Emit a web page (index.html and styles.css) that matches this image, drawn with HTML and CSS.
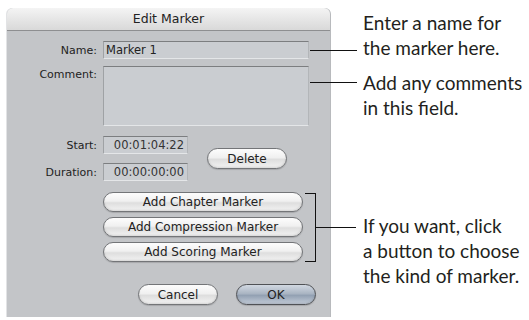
FILE: index.html
```html
<!DOCTYPE html>
<html lang="en">
<head>
    <meta charset="UTF-8">
    <title>Edit Marker</title>
    <link rel="stylesheet" href="styles.css">
</head>
<body>
    <div class="page">
        <!-- Edit Marker dialog -->
        <div class="dialog">
            <div class="titlebar">Edit Marker</div>
            <div class="dialog-body">
                <div class="form-row">
                    <label>Name:</label>
                    <div class="field name-field">Marker 1</div>
                </div>
                <div class="form-row comment-row">
                    <label>Comment:</label>
                    <div class="field comment-field"></div>
                </div>

                <div class="timing">
                    <div class="timing-fields">
                        <div class="form-row">
                            <label>Start:</label>
                            <div class="field time-field">00:01:04:22</div>
                        </div>
                        <div class="form-row">
                            <label>Duration:</label>
                            <div class="field time-field">00:00:00:00</div>
                        </div>
                    </div>
                    <button class="btn delete-btn">Delete</button>
                </div>

                <div class="marker-buttons">
                    <button class="btn wide-btn">Add Chapter Marker</button>
                    <button class="btn wide-btn">Add Compression Marker</button>
                    <button class="btn wide-btn">Add Scoring Marker</button>
                    <span class="bracket"></span>
                </div>

                <div class="actions">
                    <button class="btn action-btn">Cancel</button>
                    <button class="btn action-btn default">OK</button>
                </div>
            </div>
        </div>

        <!-- callouts -->
        <div class="notes">
            <p class="note note-name">Enter a name for<br>the marker here.</p>
            <p class="note note-comment">Add any comments<br>in this field.</p>
            <p class="note note-buttons">If you want, click<br>a button to choose<br>the kind of marker.</p>
        </div>
    </div>
</body>
</html>
```

FILE: styles.css
```css
body {
    margin: 0;
    background-color: #fff;
    font-family: "DejaVu Sans", Verdana, sans-serif;
}

.page {
    display: flex;
    position: relative;
    width: 529px;
    height: 320px;
    overflow: hidden;
}

/* dialog window */
.dialog {
    margin: 8px 0 0 7px;
    width: 323px;
    height: 309px;
    background-color: #c3c5c8;
    border-radius: 6px 6px 0 0;
    box-shadow: -1px 0 0 #e2e3e5, 1px 0 0 #b8babd;
}

.titlebar {
    height: 22px;
    line-height: 22px;
    text-align: center;
    font-size: 12.5px;
    color: #222;
    background: linear-gradient(to bottom, #f4f4f4, #e6e6e6 50%, #d9d9d9);
    border-radius: 6px 6px 0 0;
    border-bottom: 1px solid #8e8f91;
}

.dialog-body {
    padding: 10px 0 0 0;
    font-size: 11px;
    color: #222;
}

.form-row {
    display: flex;
    align-items: center;
}

.form-row label {
    width: 90px;
    text-align: right;
    margin-right: 6px;
}

.comment-row {
    align-items: flex-start;
    margin-top: 7px;
}

.comment-row label {
    margin-top: 2px;
}

.field {
    box-sizing: border-box;
    height: 18px;
    line-height: 16px;
    padding: 0 3px;
    background-color: #cacdd1;
    border: 1px solid;
    border-color: #7c7e80 #b3b6b9 #e4e6e8 #9fa2a5;
}

.name-field {
    width: 206px;
    padding-left: 2px;
    font-size: 11.5px;
}

.comment-field {
    width: 206px;
    height: 60px;
}

.time-field {
    width: 85px;
    height: 18px;
    text-align: right;
    font-size: 11.5px;
    color: #333;
}

/* start / duration + delete */
.timing {
    display: flex;
    align-items: center;
    margin-top: 10px;
}

.timing-fields .form-row + .form-row {
    margin-top: 9px;
}

/* aqua buttons */
.btn {
    box-sizing: border-box;
    height: 21px;
    padding: 0;
    font-family: inherit;
    font-size: 12px;
    color: #222;
    border: 1px solid #737578;
    border-radius: 11px;
    background: linear-gradient(to bottom, #fdfdfd 0%, #f0f0f0 45%, #dedede 55%, #f3f3f3 100%);
    box-shadow: inset 0 -1px 2px rgba(0, 0, 0, 0.12), 0 1px 1px rgba(0, 0, 0, 0.15);
    cursor: pointer;
}

.delete-btn {
    width: 80px;
    margin-left: 19px;
}

.marker-buttons {
    position: relative;
    display: flex;
    flex-direction: column;
    gap: 5px;
    width: 200px;
    margin: 11px 0 0 96px;
}

.wide-btn {
    width: 200px;
    height: 20px;
}

.bracket {
    position: absolute;
    top: 1px;
    bottom: 0;
    left: 202px;
    width: 10px;
    border: 1.5px solid #111;
    border-left: none;
}

.bracket::after {
    content: "";
    position: absolute;
    top: 33px;
    left: 10px;
    width: 41px;
    border-top: 1.5px solid #111;
}

.actions {
    display: flex;
    gap: 18px;
    margin: 22px 0 0 131px;
}

.action-btn {
    width: 80px;
    height: 21px;
}

.action-btn.default {
    border-color: #505256;
    background: linear-gradient(to bottom, #d2d9e2 0%, #aab5c3 45%, #93a1b3 55%, #c3ccd8 100%);
}

/* callouts */
.notes {
    margin-left: 33px;
    font-family: "Lato", "Liberation Sans", sans-serif;
    font-size: 19px;
    line-height: 25px;
    color: #231f20;
}

.note {
    position: relative;
    margin: 0;
    white-space: nowrap;
}

.note-name {
    margin-top: 10px;
}

.note-comment {
    margin-top: 10px;
}

.note-buttons {
    margin-top: 93px;
}

.note-name::before,
.note-comment::before {
    content: "";
    position: absolute;
    left: -53px;
    width: 47px;
    border-top: 1.5px solid #111;
}

.note-name::before {
    top: 40px;
}

.note-comment::before {
    top: 12px;
}
```
